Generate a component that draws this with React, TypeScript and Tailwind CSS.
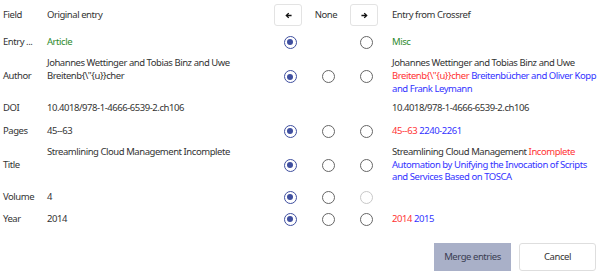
import React from "react";

const font = { fontFamily: '"Segoe UI", "Noto Sans", "Open Sans", sans-serif' };

type RState = "on" | "off" | "dis" | "none";

function Radio({ s }: { s: RState }) {
  if (s === "none") return <div className="w-[13px] h-[13px]" />;
  if (s === "on")
    return (
      <div className="w-[13px] h-[13px] rounded-full border-[1.5px] border-[#3f4f9f] flex items-center justify-center">
        <div className="w-[6px] h-[6px] rounded-full bg-[#3f4f9f]" />
      </div>
    );
  return (
    <div
      className={
        "w-[13px] h-[13px] rounded-full border-[1.5px] " +
        (s === "dis" ? "border-[#c8c8c8]" : "border-[#666666]")
      }
    />
  );
}

function Arrow({ dir }: { dir: "l" | "r" }) {
  return (
    <div className="w-[28px] h-[22px] border border-[#e3e3e3] rounded-[3px] bg-white flex items-center justify-center">
      <svg width="7" height="7" viewBox="0 0 8 8" className={dir === "r" ? "rotate-180" : ""}>
        <path d="M7.5 4H1.8M4.3 1.3L1.5 4L4.3 6.7" fill="none" stroke="#111" strokeWidth="1.5" />
      </svg>
    </div>
  );
}

type Row = {
  label: string;
  h: string;
  pt: string;
  left: React.ReactNode;
  radios: [RState, RState, RState];
  right: React.ReactNode;
};

const R = ({ c }: { c: string }) => <span className="text-[#ff3333]">{c}</span>;
const B = ({ c }: { c: string }) => <span className="text-[#3333ff]">{c}</span>;

const rows: Row[] = [
  {
    label: "Entry ...",
    h: "h-[26px]",
    pt: "pt-[6.6px]",
    left: <span className="text-[#2e8b2e]">Article</span>,
    radios: ["on", "none", "off"],
    right: <span className="text-[#2e8b2e]">Misc</span>,
  },
  {
    label: "Author",
    h: "h-[43px]",
    pt: "pt-[2.3px]",
    left: (
      <>
        Johannes Wettinger and Tobias Binz and Uwe
        <br />
        Breitenb{"{\\\"{u}}"}cher
      </>
    ),
    radios: ["on", "off", "off"],
    right: (
      <>
        Johannes Wettinger and Tobias Binz and Uwe <R c={"Breitenb{\\\"{u}}cher"} />{" "}
        <B c="Breitenbücher and Oliver Kopp and Frank Leymann" />
      </>
    ),
  },
  {
    label: "DOI",
    h: "h-[20px]",
    pt: "pt-[3.6px]",
    left: "10.4018/978-1-4666-6539-2.ch106",
    radios: ["none", "none", "none"],
    right: "10.4018/978-1-4666-6539-2.ch106",
  },
  {
    label: "Pages",
    h: "h-[26px]",
    pt: "pt-[6.6px]",
    left: "45--63",
    radios: ["on", "off", "off"],
    right: (
      <>
        <R c="45--63" /> <B c="2240-2261" />
      </>
    ),
  },
  {
    label: "Title",
    h: "h-[42px]",
    pt: "pt-[1.8px]",
    left: "Streamlining Cloud Management Incomplete",
    radios: ["on", "off", "off"],
    right: (
      <>
        Streamlining Cloud Management <R c="Incomplete" />{" "}
        <B c="Automation by Unifying the Invocation of Scripts and Services Based on TOSCA" />
      </>
    ),
  },
  {
    label: "Volume",
    h: "h-[22px]",
    pt: "pt-[4.6px]",
    left: "4",
    radios: ["on", "off", "dis"],
    right: "",
  },
  {
    label: "Year",
    h: "h-[22px]",
    pt: "pt-[4.6px]",
    left: "2014",
    radios: ["on", "off", "off"],
    right: (
      <>
        <R c="2014" /> <B c="2015" />
      </>
    ),
  },
];

export default function App() {
  return (
    <div
      className="w-[600px] h-[277px] bg-white text-[#333333] text-[9.5px] leading-[12.8px] tracking-[-0.45px] overflow-hidden"
      style={font}
    >
      <div className="flex items-center h-[29px] pt-[1px]">
        <div className="w-[47px] pl-[3px]">Field</div>
        <div className="w-[227px]">Original entry</div>
        <Arrow dir="l" />
        <div className="w-[48px] text-center">None</div>
        <Arrow dir="r" />
        <div className="pl-[14px]">Entry from Crossref</div>
      </div>
      {rows.map((r) => (
        <div key={r.label} className={"flex items-center " + r.h}>
          <div className="w-[47px] pl-[3px] whitespace-nowrap">{r.label}</div>
          <div className={"w-[224px] self-stretch " + r.pt}>{r.left}</div>
          <div className="w-[38px] flex justify-center">
            <Radio s={r.radios[0]} />
          </div>
          <div className="w-[38px] flex justify-center">
            <Radio s={r.radios[1]} />
          </div>
          <div className="w-[38px] flex justify-center">
            <Radio s={r.radios[2]} />
          </div>
          <div className={"pl-[7px] w-[215px] shrink-0 self-stretch " + r.pt}>{r.right}</div>
        </div>
      ))}
      <div className="flex justify-end gap-[8px] pr-[4px] mt-[13px]">
        <div className="w-[77px] h-[28px] bg-[#a9b0c8] text-[#3a3d52] flex items-center justify-center">
          Merge entries
        </div>
        <div className="w-[77px] h-[28px] bg-white border border-[#dedede] rounded-[3px] flex items-center justify-center">
          Cancel
        </div>
      </div>
    </div>
  );
}
